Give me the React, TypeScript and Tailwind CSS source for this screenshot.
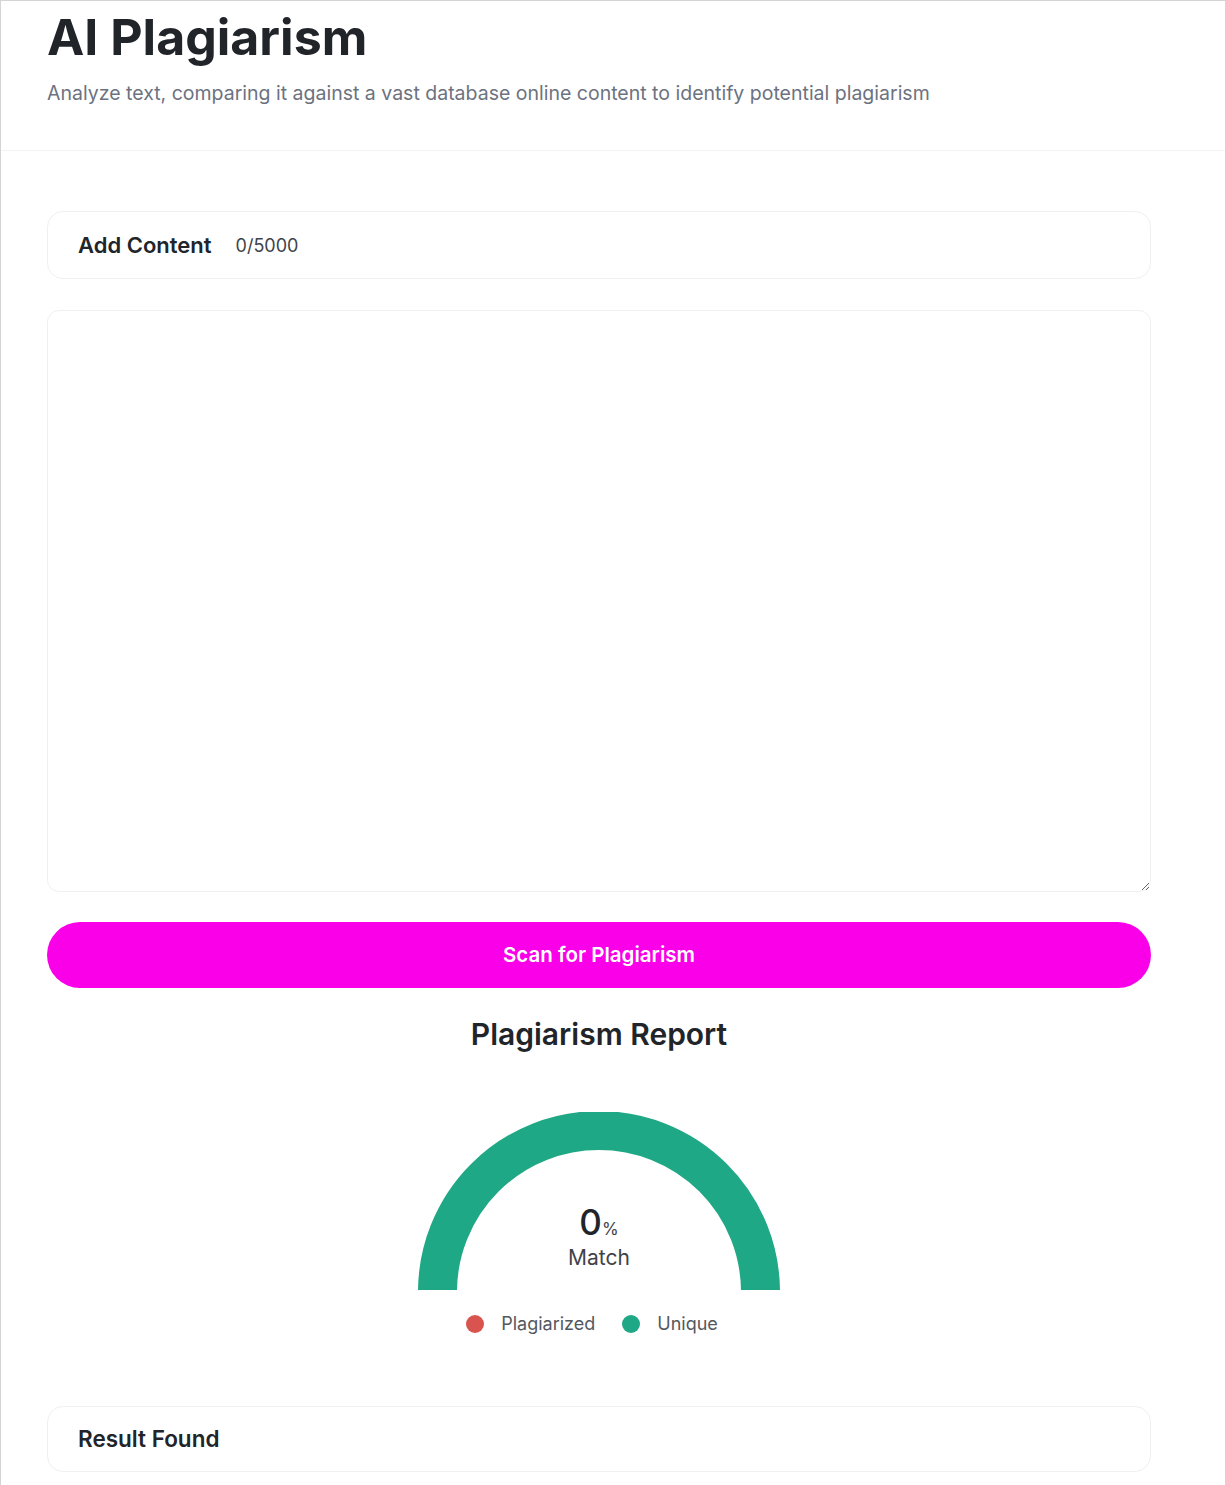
import React, { useState } from "react";

const font = { fontFamily: "Inter, 'Noto Sans', sans-serif" };

function Gauge() {
  // half donut, center at bottom middle
  return (
    <svg width="366" height="178" viewBox="0 0 366 178">
      <path d="M 21.5 180 A 161.5 161.5 0 0 1 344.5 180" fill="none" stroke="#1fa885" strokeWidth="39" />
    </svg>
  );
}

const App: React.FC = () => {
  const [text, setText] = useState("");

  return (
    <div className="min-h-screen bg-white border-t border-l border-[#d4d4d4] text-[#212529]" style={font}>
      <header className="px-[46px] pt-[6px] pb-[43px] border-b border-[#f3f3f3]">
        <h1 className="text-[50px] font-bold leading-[60px] text-[#212529]">AI Plagiarism</h1>
        <p className="mt-[12px] text-[19.5px] leading-[28px] text-[#6c727f]">
          Analyze text, comparing it against a vast database online content to identify potential plagiarism
        </p>
      </header>

      <main className="pl-[46px] pr-[74px] pt-[60px] flex flex-col">
        <div className="h-[68px] rounded-[16px] border border-[#f0f0f0] flex items-center gap-[24px] px-[30px]">
          <span className="text-[22px] font-semibold text-[#212529]">Add Content</span>
          <span className="text-[18px] text-[#3f4349]">{text.length}/5000</span>
        </div>

        <textarea
          value={text}
          onChange={e => setText(e.target.value)}
          className="mt-[31px] h-[582px] rounded-[12px] border border-[#f0f0f0] p-4 outline-none resize-y"
        />

        <button className="mt-[30px] h-[66px] rounded-full bg-[#fa00e8] text-white text-[20.5px] font-semibold">
          Scan for Plagiarism
        </button>

        <h2 className="mt-[26px] text-center text-[30px] leading-[40px] font-semibold text-[#212529]">Plagiarism Report</h2>

        <div className="mt-[58px] flex flex-col items-center">
          <div className="relative">
            <Gauge />
            <div className="absolute left-0 right-0 top-[90px] flex flex-col items-center">
              <div className="flex items-baseline">
                <span className="text-[35px] font-medium leading-[40px] text-[#212529]">0</span>
                <span className="text-[17px] text-[#3f4349]">%</span>
              </div>
              <span className="mt-[2px] text-[21px] leading-[26px] text-[#3f4349]">Match</span>
            </div>
          </div>
          <div className="mt-[20px] mr-[14px] flex items-center gap-[27px] text-[18px] text-[#54585e]">
            <div className="flex items-center gap-[17px]">
              <span className="w-[18px] h-[18px] rounded-full bg-[#d9534f]" />
              <span>Plagiarized</span>
            </div>
            <div className="flex items-center gap-[17px]">
              <span className="w-[18px] h-[18px] rounded-full bg-[#1fa885]" />
              <span>Unique</span>
            </div>
          </div>
        </div>

        <div className="mt-[69px] h-[66px] rounded-[16px] border border-[#f0f0f0] flex items-center px-[30px]">
          <span className="text-[22.5px] font-semibold text-[#212529]">Result Found</span>
        </div>
      </main>
    </div>
  );
};

export default App;
